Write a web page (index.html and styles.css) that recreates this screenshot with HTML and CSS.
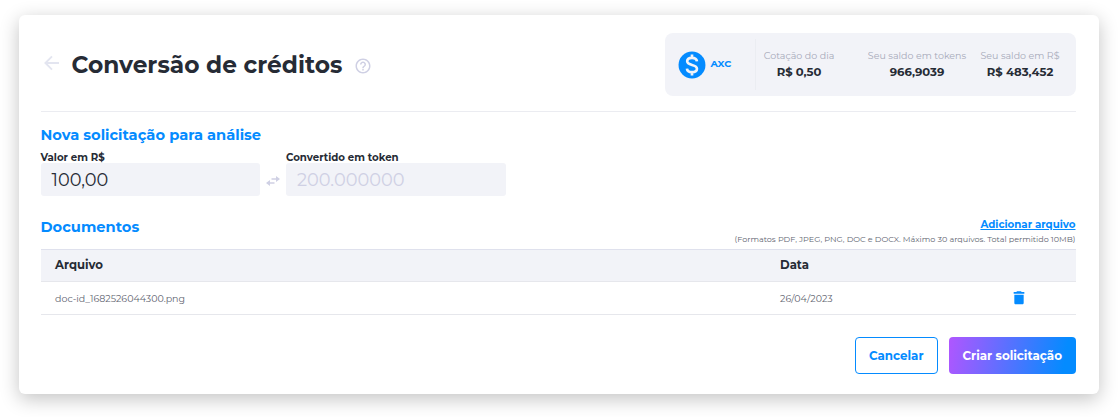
FILE: index.html
```html
<!DOCTYPE html>
<html lang="pt-BR">
<head>
<meta charset="utf-8">
<title>Conversão de créditos</title>
<link rel="stylesheet" href="styles.css">
</head>
<body>
<main class="card">
  <header class="header">
    <svg class="back" width="16" height="16" viewBox="0 0 16 16"><path d="M15 8H1.6M8 1.4 1.4 8 8 14.6" fill="none" stroke="#e3e5f0" stroke-width="1.9"/></svg>
    <h1 class="title">Conversão de créditos</h1>
    <svg class="help" width="18" height="18" viewBox="0 0 24 24"><path fill="#cfd0e4" d="M11 18h2v-2h-2v2zm1-16C6.480 2 2 6.480 2 12s4.480 10 10 10 10-4.480 10-10S17.520 2 12 2zm0 18c-4.410 0-8-3.590-8-8s3.590-8 8-8 8 3.590 8 8-3.590 8-8 8zm0-14c-2.210 0-4 1.790-4 4h2c0-1.100.9-2 2-2s2 .9 2 2c0 2-3 1.750-3 5h2c0-2.250 3-2.500 3-5 0-2.210-1.790-4-4-4z"/></svg>
    <section class="balance">
      <div class="coin">
        <svg width="32" height="32" viewBox="0 0 24 24"><circle cx="12" cy="12" r="10.100" fill="#048bff"/><path fill="none" stroke="#f2f3f8" stroke-width="2" d="M15.700 9.300C15.400 7.300 13.900 6.700 12 6.700c-2.100 0-3.600.9-3.600 2.500 0 3.700 7.300 1.800 7.300 5.600 0 1.600-1.500 2.600-3.700 2.600-2.100 0-3.600-.9-3.800-2.700M12 4.200v2.600M12 17.200v2.600"/></svg>
        <span class="symbol">AXC</span>
      </div>
      <div class="stat rate"><span class="stat-label">Cotação do dia</span><strong class="stat-value">R$ 0,50</strong></div>
      <div class="stat tokens"><span class="stat-label">Seu saldo em tokens</span><strong class="stat-value">966,9039</strong></div>
      <div class="stat money"><span class="stat-label">Seu saldo em R$</span><strong class="stat-value">R$ 483,452</strong></div>
    </section>
  </header>
  <h2 class="section-title request-title">Nova solicitação para análise</h2>
  <div class="fields">
    <label class="field"><span class="field-label">Valor em R$</span><span class="input">100,00</span></label>
    <svg class="swap" width="14" height="10" viewBox="0 0 14 10"><path d="M5.500 3H11M8.500 7H3" stroke="#cfd0e4" stroke-width="1.500"/><path d="M10 0l4 3-4 3zM4 4 0 7l4 3z" fill="#cfd0e4"/></svg>
    <label class="field"><span class="field-label">Convertido em token</span><span class="input converted">200.000000</span></label>
  </div>
  <div class="docs-head">
    <h2 class="section-title">Documentos</h2>
    <div class="upload"><a class="add">Adicionar arquivo</a><small class="formats">(Formatos PDF, JPEG, PNG, DOC e DOCX. Máximo 30 arquivos. Total permitido 10MB)</small></div>
  </div>
  <div class="table">
    <div class="row head"><span>Arquivo</span><span>Data</span><span></span></div>
    <div class="row"><span>doc-id_1682526044300.png</span><span>26/04/2023</span>
      <svg width="16" height="16" viewBox="0 0 24 24"><path fill="#048bff" d="M5 19.500c0 1.100.9 2 2 2h10c1.100 0 2-.9 2-2V7H5zM20 3h-4l-1-1H9L8 3H4v2.500h16z"/></svg>
    </div>
  </div>
  <footer class="actions"><button class="btn cancel">Cancelar</button><button class="btn create">Criar solicitação</button></footer>
</main>
</body>
</html>
```
FILE: styles.css
```css
* { box-sizing: border-box; }
body { margin: 0; min-height: 417px; padding: 15px 19px 0; background: #fff; color: #262b35; font-family: Montserrat, Inter, sans-serif; white-space: nowrap; }
.card { width: 1080px; height: 379px; padding: 0 23.500px 0 21.500px; border-radius: 6px; background: #fff; box-shadow: 0 5px 19px rgba(0, 0, 0, .24); }
.header { height: 97px; display: flex; align-items: flex-start; border-bottom: 1px solid #ebecf1; }
.back { margin: 40px 0 0 3px; }
.title { margin: 34px 0 0 12px; width: 282.500px; font-size: 23.300px; line-height: 32px; font-weight: 700; }
.help { margin-top: 42px; }
.balance { margin: 18px 0 0 auto; width: 411px; height: 63px; display: flex; align-items: center; border-radius: 8px; background: #f2f3f8; }
.coin { width: 91px; height: 51px; padding-left: 11px; display: flex; align-items: center; gap: 3px; border-right: 1px solid #ebedf2; }
.symbol { color: #048bff; font-size: 9.700px; font-weight: 700; line-height: 14px; margin-top: -2px; }
.stat { display: flex; flex-direction: column; align-items: center; }
.stat-label { color: #a6a9b9; font-size: 9.500px; line-height: 14px; }
.stat-value { font-size: 11.600px; line-height: 18px; font-weight: 700; }
.rate { width: 87px; }
.tokens { width: 149px; }
.money { width: 57px; }
.section-title { margin: 0; color: #048bff; font-size: 14.650px; line-height: 20px; font-weight: 700; }
.request-title { margin-top: 13px; }
.fields { display: flex; align-items: flex-end; margin-top: 6px; }
.field { width: 219.500px; display: flex; flex-direction: column; }
.field-label { font-size: 10.200px; line-height: 12px; padding-top: 1px; margin-bottom: -1px; font-weight: 700; }
.input { height: 33px; padding-left: 11px; border-radius: 3px; background: #f2f3f8; font-size: 17.750px; line-height: 33px; font-weight: 400; }
.converted { color: #cfd0e4; }
.swap { margin: 0 6px 10px; }
.docs-head { height: 53px; display: flex; justify-content: space-between; padding-top: 21px; }
.upload { display: flex; flex-direction: column; align-items: flex-end; }
.add { color: #048bff; font-size: 10.250px; line-height: 16px; font-weight: 700; text-decoration: underline; }
.formats { color: #626571; font-size: 8.050px; line-height: 13px; }
.row { height: 33px; display: grid; grid-template-columns: 725px 230.500px 1fr; align-items: center; padding-left: 14.500px; border-bottom: 1px solid #e6e7ec; font-size: 9.500px; color: #626571; }
.head { padding-bottom: 1px; background: #f2f3f8; border-top: 1px solid #dfe1ed; font-size: 11.700px; font-weight: 700; color: #262b35; }
.actions { display: flex; justify-content: flex-end; gap: 11px; margin-top: 22px; }
.btn { height: 37px; padding: 0 0 1px; border-radius: 4px; font-family: inherit; font-size: 11.900px; font-weight: 700; }
.cancel { width: 83.500px; border: 1px solid #048bff; background: #fff; color: #048bff; }
.create { width: 126.500px; border: 0; background: linear-gradient(100deg, #b056ff, #048bff 90%); color: #fff; }
```
